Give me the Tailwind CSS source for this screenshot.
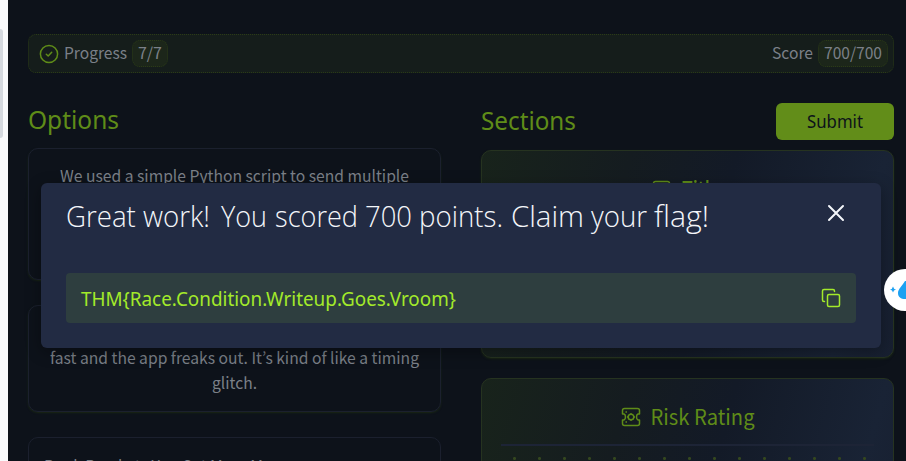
<!DOCTYPE html>
<html lang="en">
<head>
<meta charset="utf-8">
<title>Write-up</title>
<script src="https://cdn.jsdelivr.net/npm/@tailwindcss/browser@4"></script>
</head>
<body class="relative flex h-[461px] w-[906px] overflow-hidden bg-[#0d121a] font-['Noto_Sans_CJK_JP','Noto_Sans',sans-serif] text-[#7b8088]">
<aside class="h-full w-2 shrink-0 bg-[#f9fafc] pt-[29px]"><div class="h-[109px] w-[3px] rounded-r-sm bg-[#d5d9df]"></div></aside>
<main class="h-[461px] w-[898px] overflow-hidden pt-[34px] pr-3 pl-5">
  <div class="flex h-[39px] items-center justify-between rounded-lg border border-dotted border-[#2b3b17] bg-[#151d1b] pr-[5px] pl-[10px]">
    <div class="flex items-center">
      <svg class="mr-[5px] size-5 text-[#5f8c18]" viewBox="0 0 20 20" fill="none" stroke="currentColor" stroke-width="1.5" stroke-linecap="round" stroke-linejoin="round"><circle cx="10" cy="10" r="8.6"/><path d="M7.3 10.3 9.2 12 12.7 8.3"/></svg>
      <svg class="h-6 w-[64px] overflow-visible" fill="currentColor"><text x="0" y="17" font-size="16" textLength="63" lengthAdjust="spacingAndGlyphs">Progress</text></svg>
      <span class="ml-[4px] flex h-[27px] w-9 items-center justify-center rounded-lg border border-dotted border-[#2b3b17] bg-[#1c261a]"><svg class="h-6 w-6 overflow-visible" fill="currentColor"><text x="0" y="17" font-size="16" textLength="24" lengthAdjust="spacingAndGlyphs">7/7</text></svg></span>
    </div>
    <div class="flex items-center">
      <svg class="h-6 w-[41px] overflow-visible" fill="currentColor"><text x="0" y="17" font-size="16" textLength="41" lengthAdjust="spacingAndGlyphs">Score</text></svg>
      <span class="ml-[5px] flex h-[27px] w-[70px] items-center justify-center rounded-lg border border-dotted border-[#2b3b17] bg-[#1c261a]"><svg class="h-6 w-[58px] overflow-visible" fill="currentColor"><text x="0" y="17" font-size="16" textLength="58" lengthAdjust="spacingAndGlyphs">700/700</text></svg></span>
    </div>
  </div>
  <div class="mt-[30px] grid grid-cols-[413px_413px] gap-10">
    <section>
      <h2 class="h-[45px] font-['Noto_Sans',sans-serif]"><svg class="h-[38px] w-[110px] overflow-visible" fill="#5f8c18"><text x="0" y="26" font-size="24.5" textLength="91" lengthAdjust="spacingAndGlyphs">Options</text></svg></h2>
      <div class="h-[132px] rounded-[10px] border border-[#1b202e] pt-[15px] shadow-[0_1px_2px_#1a2714]"><svg class="h-6 w-full" fill="currentColor"><text x="31" y="18" font-size="16" textLength="349" lengthAdjust="spacingAndGlyphs">We used a simple Python script to send multiple</text></svg></div>
      <div class="mt-[25px] flex h-[107px] flex-col justify-end rounded-[10px] border border-[#1b202e] pb-[15px] shadow-[0_1px_2px_#1a2714]">
        <svg class="h-[50px] w-full overflow-visible" fill="currentColor"><text x="21" y="18" font-size="16" textLength="369" lengthAdjust="spacingAndGlyphs">fast and the app freaks out. It’s kind of like a timing</text><text x="183" y="43" font-size="16" textLength="45" lengthAdjust="spacingAndGlyphs">glitch.</text></svg>
      </div>
      <div class="mt-[25px] h-[107px] rounded-[10px] border border-[#1b202e] pt-[15px]"><svg class="h-6 w-full overflow-visible" fill="currentColor"><text x="15" y="19" font-size="16" textLength="219" lengthAdjust="spacingAndGlyphs">Book Brackets You Get More M</text></svg></div>
    </section>
    <section>
      <div class="flex h-[47px] justify-between font-['Noto_Sans',sans-serif]">
        <h2><svg class="h-[38px] w-[110px] overflow-visible" fill="#5f8c18"><text x="0" y="27" font-size="24.5" textLength="95" lengthAdjust="spacingAndGlyphs">Sections</text></svg></h2>
        <button class="flex h-[37px] w-[118px] items-center justify-center rounded-md bg-[#628d19]"><svg class="h-6 w-14 overflow-visible" fill="#0d121a"><text x="0" y="18" font-size="17.500" textLength="56" lengthAdjust="spacingAndGlyphs">Submit</text></svg></button>
      </div>
      <article class="h-[208px] rounded-[10px] border border-[#263320] bg-[linear-gradient(105deg,#18231b_0%,#151c20_32%,#131a27_55%,#192335_87%,#171f30_100%)] pt-[26px] shadow-[0_1px_2px_#1a2714]">
        <svg class="h-8 w-full overflow-visible" fill="none" stroke="#5f8c18" stroke-width="1.5"><rect x="171.5" y="4.5" width="16" height="16" rx="2"/><text x="200" y="20" font-size="21" font-weight="500" fill="#5f8c18" stroke="none" textLength="38" lengthAdjust="spacingAndGlyphs">Title</text></svg>
      </article>
      <article class="mt-5 h-[208px] rounded-[10px] border border-[#263320] bg-[linear-gradient(105deg,#18231b_0%,#151c20_32%,#131a27_55%,#192335_87%,#171f30_100%)] px-[19px] pt-[21px]">
        <svg class="h-[46px] w-full overflow-visible border-b-2 border-[#1d2436]" fill="none" stroke="#5f8c18" stroke-width="1.5" stroke-linejoin="round">
          <path d="M123.500 8.500h13q2 0 2 2V14h-1.500q-1.500.5-1.500 3t1.500 3h1.500v3.500q0 2-2 2h-13q-2 0-2-2V20h1.500q1.500-.5 1.500-3t-1.500-3h-1.500v-3.500q0-2 2-2Z"/><circle cx="130" cy="17" r="2.800"/><path stroke-width="1.300" d="M130 13v1.200M130 19.800V21M126 17h1.200M132.800 17h1.200M124.500 12h1.500M124.500 22h1.500"/><text x="149.500" y="24.500" font-size="21" fill="#5f8c18" stroke="none" textLength="104" lengthAdjust="spacingAndGlyphs">Risk Rating</text>
        </svg>
        <div class="mt-[11px] h-[60px] bg-[radial-gradient(circle_at_13.5px_1.5px,#34471e_1.2px,transparent_1.8px)] bg-[size:25px_25px]"></div>
      </article>
    </section>
  </div>
</main>
<div role="dialog" class="absolute top-[183px] left-[41px] h-[165px] w-[840px] rounded-md bg-[#222b43] px-[25px] pt-[15px] font-['Noto_Sans',sans-serif] shadow-[0_4px_16px_#0005]">
  <div class="flex justify-between">
    <svg class="h-10 w-[660px] overflow-visible" fill="#f4f6fa"><text y="29" font-family="Open Sans" font-weight="300" font-size="28.500"><tspan x="0" textLength="144" lengthAdjust="spacingAndGlyphs">Great work!</tspan> <tspan x="155" textLength="46" lengthAdjust="spacingAndGlyphs">You</tspan> <tspan x="209" textLength="83" lengthAdjust="spacingAndGlyphs">scored</tspan> <tspan x="299" textLength="47" lengthAdjust="spacingAndGlyphs">700</tspan> <tspan x="353" textLength="84" lengthAdjust="spacingAndGlyphs">points.</tspan> <tspan x="445" textLength="73" lengthAdjust="spacingAndGlyphs">Claim</tspan> <tspan x="525" textLength="56" lengthAdjust="spacingAndGlyphs">your</tspan> <tspan x="588" textLength="55" lengthAdjust="spacingAndGlyphs">flag!</tspan></text></svg>
    <svg class="mt-[5px] mr-[10px] size-5" fill="none" stroke="#f4f6fa" stroke-width="2" stroke-linecap="round"><path d="M3 3 17 17M17 3 3 17"/></svg>
  </div>
  <div class="mt-[35px] flex h-[50px] items-center justify-between rounded-[4px] bg-[#2e3e3f] pr-[14px] pl-[15px]">
    <svg class="h-[30px] w-[390px] overflow-visible" fill="#a3ea2a"><text x="0" y="23" font-size="19" textLength="375" lengthAdjust="spacingAndGlyphs">THM{Race.Condition.Writeup.Goes.Vroom}</text></svg>
    <svg class="size-[22px]" fill="none" stroke="#a3ea2a" stroke-width="1.500" stroke-linecap="round" stroke-linejoin="round"><rect x="7.500" y="7.500" width="12" height="12" rx="1.500"/><path d="M4.500 14.500H4A1.500 1.500 0 0 1 2.500 13V4A1.500 1.500 0 0 1 4 2.500h9A1.500 1.500 0 0 1 14.500 4v.5"/></svg>
  </div>
</div>
<div class="absolute top-[269px] left-[884px] h-[42px] w-[60px] rounded-full bg-white">
  <svg class="h-[42px] w-[22px]" fill="#1da1f2"><path d="M9 17.500q.5 2.500 3 3-2.500.5-3 3-.5-2.500-3-3 2.500-.5 3-3ZM21 12c-3 5-7 8-7 12 0 4 3 6 7 6h2V12Z"/></svg>
</div>
</body>
</html>
